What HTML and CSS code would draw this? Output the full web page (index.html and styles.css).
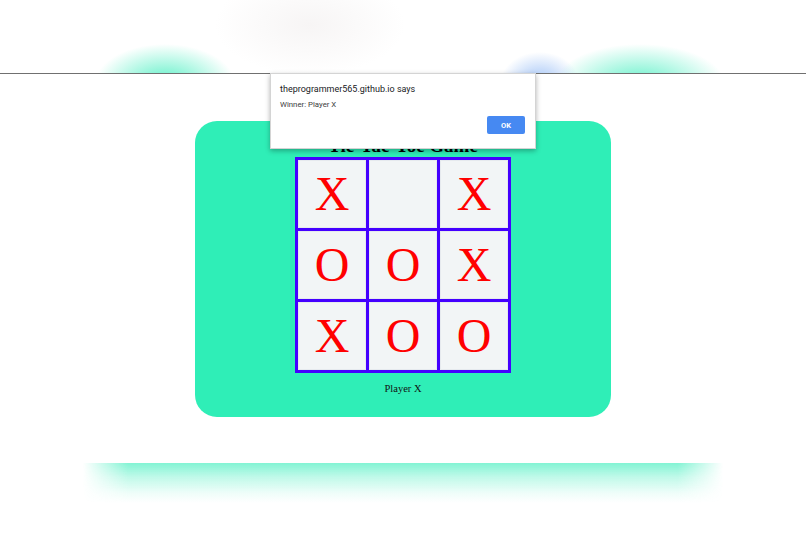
FILE: index.html
```html
<!DOCTYPE html>
<html>
<head>
<meta charset="utf-8">
<title>Tic-Tac-Toe Game</title>
<link rel="stylesheet" href="styles.css">
</head>
<body>
<div class="topbar"></div>
<main class="page">
  <section class="card">
    <h1 class="title">Tic-Tac-Toe Game</h1>
    <div class="board">
      <div class="cell">X</div>
      <div class="cell"></div>
      <div class="cell">X</div>
      <div class="cell">O</div>
      <div class="cell">O</div>
      <div class="cell">X</div>
      <div class="cell">X</div>
      <div class="cell">O</div>
      <div class="cell">O</div>
    </div>
    <p class="status">Player X</p>
  </section>
  <div class="glow"></div>
</main>
<div class="dialog">
  <div class="dialog-title">theprogrammer565.github.io says</div>
  <div class="dialog-msg">Winner: Player X</div>
  <div class="dialog-actions"><button class="ok">OK</button></div>
</div>
</body>
</html>
```
FILE: styles.css
```css
html, body {
  margin: 0;
  padding: 0;
  background: #ffffff;
}
body {
  width: 806px;
  height: 537px;
  overflow: hidden;
  position: relative;
  font-family: "Liberation Serif", "Times New Roman", serif;
}
.topbar {
  height: 73px;
  border-bottom: 1px solid #707070;
  background:
    radial-gradient(ellipse 70px 40px at 165px 84px, rgba(47,236,183,0.8), rgba(47,236,183,0) 100%),
    radial-gradient(ellipse 85px 40px at 640px 84px, rgba(47,236,183,0.75), rgba(47,236,183,0) 100%),
    radial-gradient(ellipse 40px 32px at 540px 84px, rgba(90,150,240,0.6), rgba(90,150,240,0) 100%),
    radial-gradient(ellipse 95px 50px at 310px 25px, rgba(215,205,205,0.2), rgba(215,205,205,0) 100%),
    #ffffff;
}
.page {
  display: flex;
  flex-direction: column;
  align-items: center;
  padding-top: 47px;
}
.card {
  width: 416px;
  height: 296px;
  box-sizing: border-box;
  background: #2feeb7;
  border-radius: 22px;
  display: flex;
  flex-direction: column;
  align-items: center;
  padding-top: 14px;
}
.title {
  margin: 0;
  font-size: 19px;
  line-height: 22px;
  font-weight: bold;
  color: #000;
}
.board {
  display: grid;
  grid-template-columns: repeat(3, 68px);
  grid-template-rows: repeat(3, 68px);
  gap: 3px;
  padding: 3px;
  background: #4400ff;
}
.cell {
  background: #f2f5f6;
  box-shadow: inset 0 0 0 1px #e6eaee;
  color: #ff0000;
  font-size: 48px;
  line-height: 68px;
  text-align: center;
}
.status {
  margin: 9px 0 0;
  font-size: 10.5px;
  line-height: 13px;
  font-weight: normal;
  color: #111;
}
.glow {
  margin-top: 46px;
  width: 640px;
  height: 40px;
  background: linear-gradient(to bottom, rgba(47,236,183,0.6), rgba(47,236,183,0.3) 35%, rgba(47,236,183,0.08) 75%, rgba(47,236,183,0));
  -webkit-mask-image: linear-gradient(to right, transparent, #000 45px, #000 calc(100% - 45px), transparent);
  mask-image: linear-gradient(to right, transparent, #000 45px, #000 calc(100% - 45px), transparent);
}
.dialog {
  position: absolute;
  left: 270px;
  top: 73px;
  width: 266px;
  height: 76px;
  box-sizing: border-box;
  background: #ffffff;
  border: 1px solid #d4d4d4;
  box-shadow: 0 2px 5px rgba(0,0,0,0.3);
  padding: 9px 10px 0 9px;
  font-family: Roboto, "Noto Sans", sans-serif;
  display: flex;
  flex-direction: column;
}
.dialog-title {
  font-size: 9px;
  line-height: 12px;
  color: #202124;
}
.dialog-msg {
  margin-top: 5px;
  font-size: 7.8px;
  line-height: 10px;
  color: #3c3c3c;
}
.dialog-actions {
  display: flex;
  justify-content: flex-end;
  margin-top: 6px;
}
.ok {
  width: 38px;
  height: 18px;
  border: none;
  border-radius: 2px;
  background: #4689f2;
  color: #ffffff;
  font-family: Roboto, "Noto Sans", sans-serif;
  font-size: 7.5px;
  font-weight: bold;
  padding: 0;
}
```
